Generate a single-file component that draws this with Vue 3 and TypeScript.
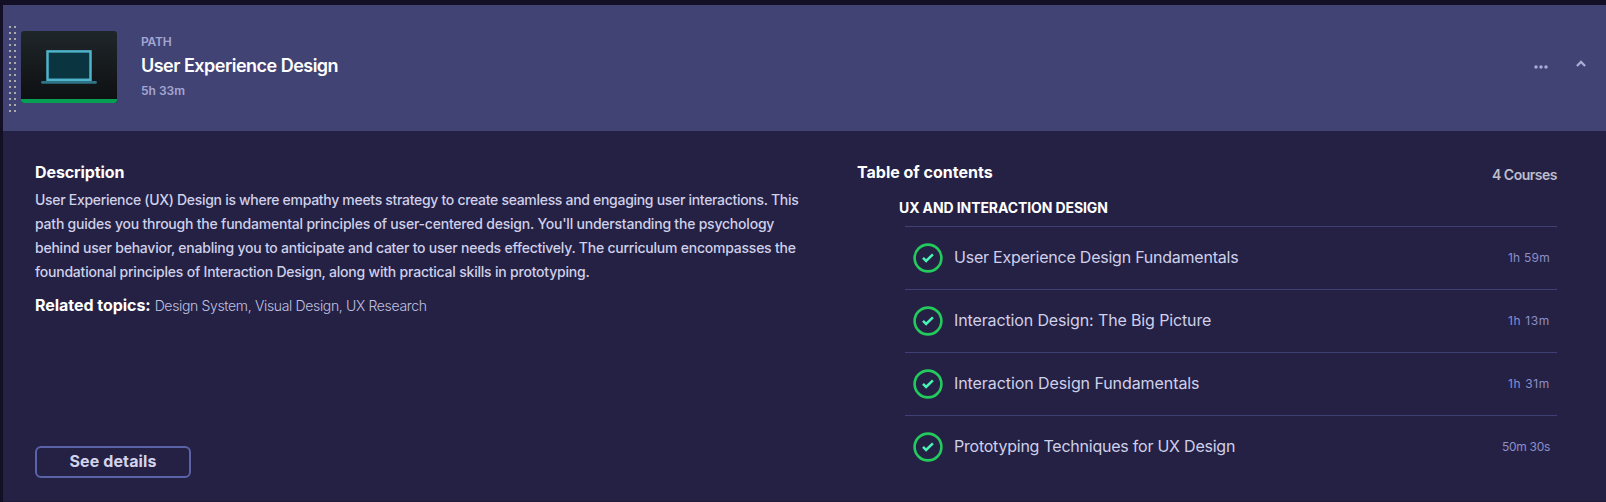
<script setup lang="ts">
interface Course {
  title: string
  duration: string
  fit: string
}

const courses: Course[] = [
  { title: 'User Experience Design Fundamentals', duration: '1h 59m', fit: 'c1' },
  { title: 'Interaction Design: The Big Picture', duration: '1h 13m', fit: 'c2' },
  { title: 'Interaction Design Fundamentals', duration: '1h 31m', fit: 'c3' },
  { title: 'Prototyping Techniques for UX Design', duration: '50m 30s', fit: 'c4' },
]

const description: string[] = [
  'User Experience (UX) Design is where empathy meets strategy to create seamless and engaging user interactions. This',
  "path guides you through the fundamental principles of user-centered design. You'll understanding the psychology",
  'behind user behavior, enabling you to anticipate and cater to user needs effectively. The curriculum encompasses the',
  'foundational principles of Interaction Design, along with practical skills in prototyping.',
]
</script>

<template>
  <main class="page">
    <article class="card">
      <header class="head">
        <div class="grip"></div>
        <svg class="thumb" width="96" height="72" viewBox="0 0 96 72">
          <defs>
            <linearGradient id="shade" x1="0" y1="0" x2="0" y2="1">
              <stop offset="0" stop-color="#1f2629" />
              <stop offset="1" stop-color="#0d0f11" />
            </linearGradient>
            <clipPath id="round"><rect width="96" height="72" rx="3" /></clipPath>
          </defs>
          <g clip-path="url(#round)">
            <rect width="96" height="72" fill="url(#shade)" />
            <rect y="68" width="96" height="4" fill="#069e52" />
          </g>
          <rect x="26.5" y="20.4" width="43" height="28.4" fill="#0a3540" stroke="#4fb3cb" stroke-width="2.5" />
          <rect x="20.2" y="50" width="55.6" height="2.8" rx="1" fill="#2f7486" />
        </svg>
        <div class="heading">
          <div class="kind">PATH</div>
          <h1 class="title">User Experience Design</h1>
          <div class="time">5h 33m</div>
        </div>
        <svg class="more" width="14" height="4" viewBox="0 0 14 4" fill="#a9acd6">
          <circle cx="2" cy="2" r="1.75" /><circle cx="7" cy="2" r="1.75" /><circle cx="12" cy="2" r="1.75" />
        </svg>
        <svg class="chevron" width="10" height="7" viewBox="0 0 10 7" fill="none" stroke="#a9acd6" stroke-width="2.2">
          <path d="M.9 6 5 1.9 9.1 6" />
        </svg>
      </header>

      <div class="body">
        <section class="about">
          <h2 class="label desc">Description</h2>
          <p class="text">
            <span v-for="(line, i) in description" :key="i" class="line" :class="'l' + (i + 1)">{{ line }}</span>
          </p>
          <div class="related">
            <span class="related-label">Related topics:</span>
            <span class="topics">Design System, Visual Design, UX Research</span>
          </div>
          <button class="details" type="button">See details</button>
        </section>

        <section class="contents">
          <div class="contents-head">
            <h2 class="label">Table of contents</h2>
            <span class="count">4 Courses</span>
          </div>
          <h3 class="group">UX AND INTERACTION DESIGN</h3>
          <ul class="list">
            <li v-for="course in courses" :key="course.title" class="row" :class="course.fit">
              <svg class="check" width="30" height="30" viewBox="0 0 30 30" fill="none">
                <circle cx="15" cy="15" r="13.4" stroke="#23ca5c" stroke-width="2.6" />
                <path d="M10 14.9 13.1 18 19.9 11.4" stroke="#48f5b5" stroke-width="2.5" />
              </svg>
              <span class="name">{{ course.title }}</span>
              <span class="duration">{{ course.duration }}</span>
            </li>
          </ul>
        </section>
      </div>
    </article>
  </main>
</template>

<style>
body {
  margin: 0;
  background: #130f25;
}
</style>

<style scoped>
.page {
  box-sizing: border-box;
  height: 502px;
  padding: 5px 0 0 3px;
  overflow: hidden;
  background: #130f25;
  font-family: Inter, "Liberation Sans", sans-serif;
  white-space: nowrap;
}
h1, h2, h3, p, ul {
  margin: 0;
  padding: 0;
}
.card {
  box-sizing: border-box;
  height: 497px;
  border-bottom: 1px solid #1f1b3a;
  background: #252144;
}
.head {
  box-sizing: border-box;
  display: flex;
  align-items: flex-start;
  height: 126px;
  padding: 0 20px 0 6px;
  background: #414375;
}
.grip {
  width: 10px;
  height: 90px;
  margin: 21px 2px 0 0;
  background: conic-gradient(from 270deg at 2px 2px, #aaaaaa 90deg, transparent 0) 0 0 / 5px 6px;
  clip-path: inset(0 3px 0 0);
}
.thumb {
  margin-top: 26px;
}
.heading {
  flex: 1;
  padding: 27px 0 0 24px;
}
.kind,
.time {
  height: 20px;
  line-height: 20px;
  font-size: 12px;
  font-weight: 600;
  color: #a4a6d2;
}
.kind {
  letter-spacing: -0.2px;
}
.title {
  height: 28px;
  line-height: 28px;
  font-size: 18px;
  font-weight: 600;
  letter-spacing: -0.51px;
  color: #fff;
}
.time {
  margin-top: 1px;
}
.more {
  margin: 60px 28px 0 0;
}
.chevron {
  margin-top: 55px;
}
.body {
  display: flex;
  height: 370px;
}
.about {
  display: flex;
  flex-direction: column;
  align-items: flex-start;
  width: 822px;
  box-sizing: border-box;
  padding: 30px 0 23px 32px;
}
.label {
  height: 22px;
  line-height: 22px;
  font-size: 16px;
  font-weight: 700;
  color: #fff;
}
.desc {
  letter-spacing: -0.1px;
}
.text {
  margin-top: 5px;
  font-size: 14px;
  font-weight: 500;
  line-height: 24px;
  color: #cfd0ea;
}
.line {
  display: block;
}
.l1 {
  letter-spacing: -0.303px;
}
.l2 {
  letter-spacing: -0.214px;
}
.l3 {
  letter-spacing: -0.23px;
}
.l4 {
  letter-spacing: -0.21px;
}
.related {
  display: flex;
  gap: 4px;
  margin-top: 9px;
  height: 24px;
  line-height: 24px;
}
.related-label {
  font-size: 16px;
  font-weight: 700;
  letter-spacing: -0.04px;
  color: #fff;
}
.topics {
  padding-top: 1px;
  font-size: 14px;
  font-weight: 300;
  letter-spacing: -0.345px;
  color: #c0c1e2;
}
.details {
  width: 156px;
  height: 32px;
  margin-top: auto;
  padding: 0 0 2px;
  border: 2px solid #5a62a8;
  border-radius: 6px;
  background: none;
  font: 700 16px/26px Inter, sans-serif;
  letter-spacing: 0.1px;
  color: #d3d3ec;
}
.contents {
  width: 700px;
  margin-left: 32px;
  padding-top: 30px;
}
.contents-head {
  display: flex;
  justify-content: space-between;
  height: 24px;
}
.count {
  padding-top: 4px;
  line-height: 20px;
  font-size: 14px;
  font-weight: 600;
  letter-spacing: -0.5px;
  color: #bdbdcb;
}
.group {
  height: 20px;
  margin: 13px 0 8px 42px;
  line-height: 20px;
  font-size: 14px;
  font-weight: 700;
  letter-spacing: -0.1px;
  color: #fff;
}
.list {
  margin-left: 48px;
  list-style: none;
}
.row {
  box-sizing: border-box;
  display: flex;
  align-items: center;
  height: 63px;
  padding: 0 7px 0 8px;
  border-top: 1px solid #3f4175;
}
.check {
  flex: none;
}
.name {
  flex: 1;
  margin-left: 11px;
  padding-bottom: 2px;
  font-size: 16px;
  font-weight: 400;
  color: #cfd0ea;
}
.duration {
  padding-bottom: 2px;
  font-size: 12px;
  color: #8b8fcb;
}
.c1 .name {
  letter-spacing: -0.234px;
}
.c2 .name {
  letter-spacing: -0.13px;
}
.c3 .name {
  letter-spacing: -0.08px;
}
.c4 .name {
  letter-spacing: -0.23px;
}
.c1 .duration {
  letter-spacing: 0.25px;
}
.c2 .duration,
.c3 .duration {
  letter-spacing: 0.65px;
}
.c4 .duration {
  letter-spacing: -0.3px;
}
</style>
